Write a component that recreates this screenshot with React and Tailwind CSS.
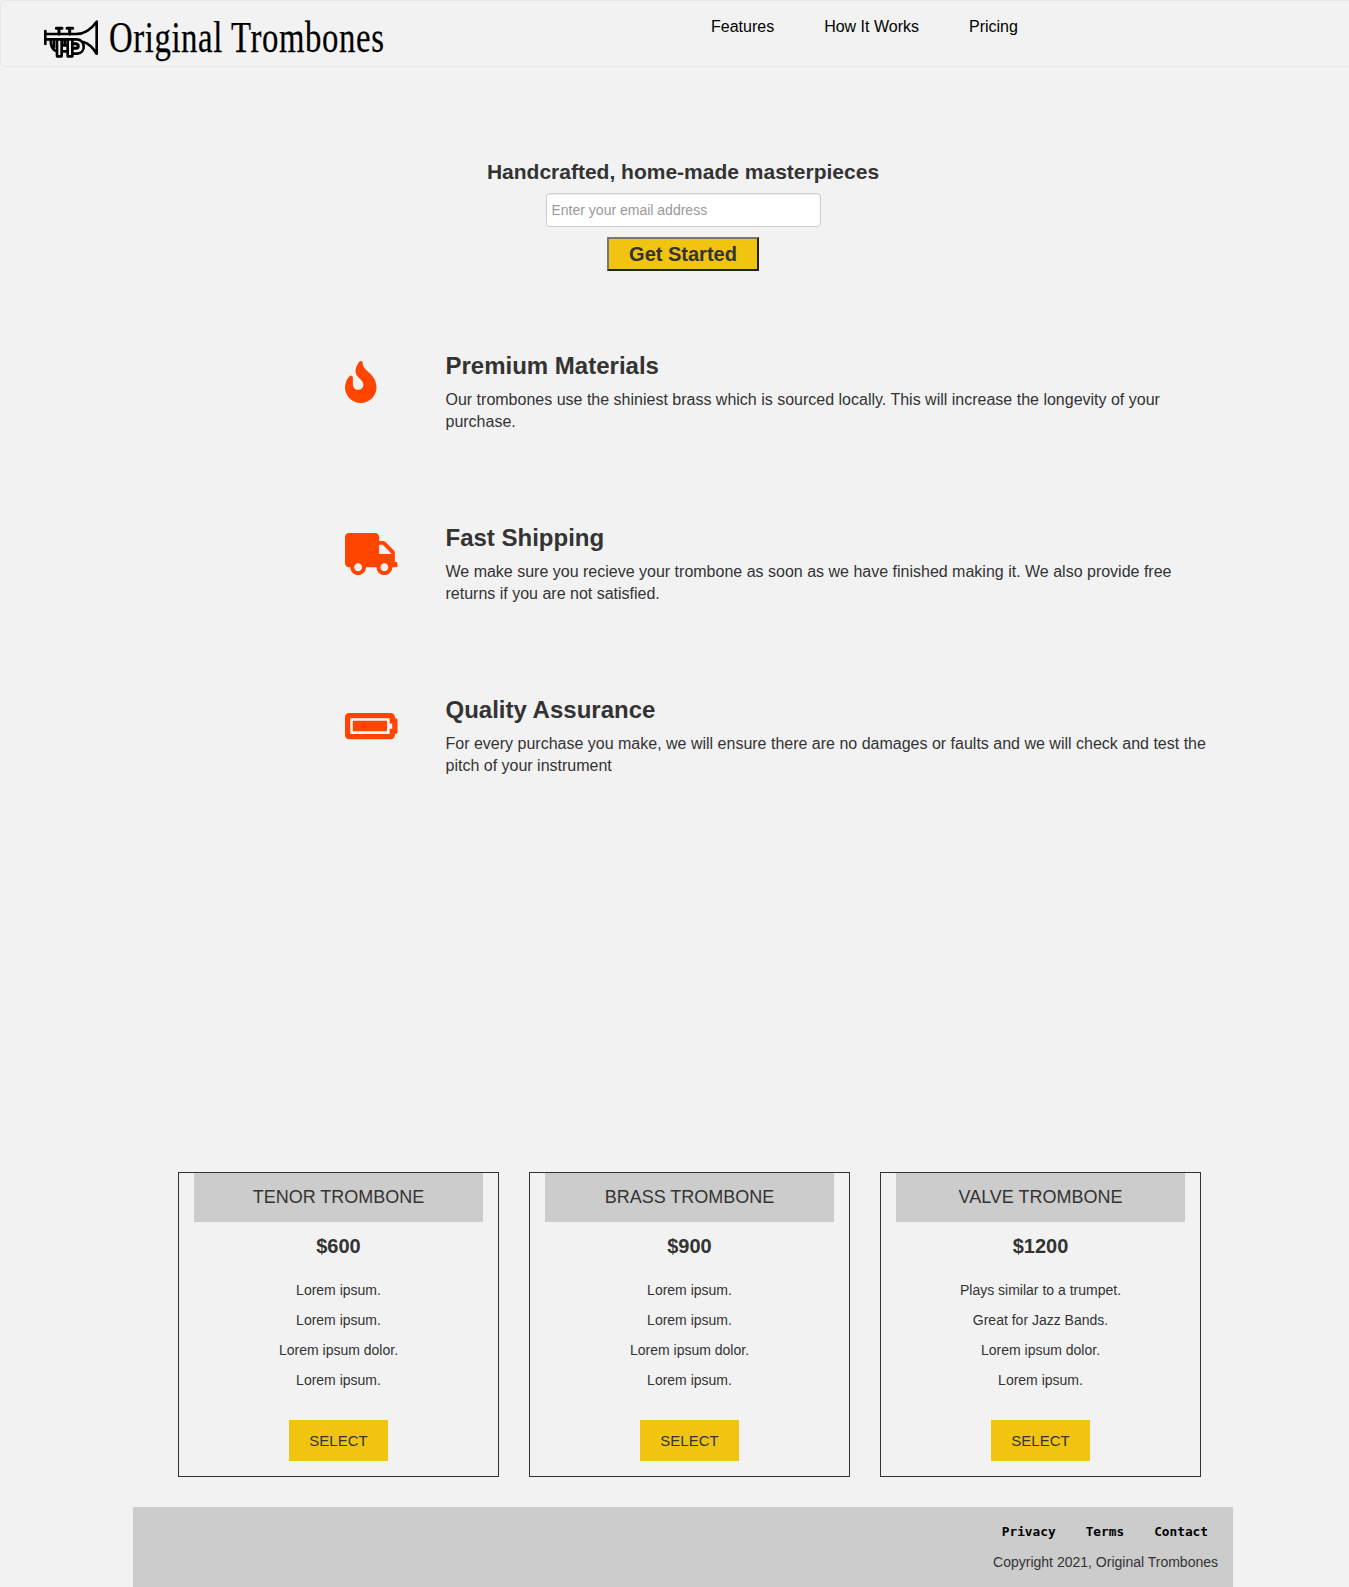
import { FaFire, FaTruck, FaBatteryFull } from "react-icons/fa";

const features = [
  {
    icon: FaFire,
    iconWidth: "w-[31.5px]",
    title: "Premium Materials",
    text: "Our trombones use the shiniest brass which is sourced locally. This will increase the longevity of your purchase.",
  },
  {
    icon: FaTruck,
    iconWidth: "w-[52.5px]",
    title: "Fast Shipping",
    text: "We make sure you recieve your trombone as soon as we have finished making it. We also provide free returns if you are not satisfied.",
  },
  {
    icon: FaBatteryFull,
    iconWidth: "w-[52.5px]",
    title: "Quality Assurance",
    text: "For every purchase you make, we will ensure there are no damages or faults and we will check and test the pitch of your instrument",
  },
];

const products = [
  {
    name: "TENOR TROMBONE",
    price: "$600",
    lines: ["Lorem ipsum.", "Lorem ipsum.", "Lorem ipsum dolor.", "Lorem ipsum."],
  },
  {
    name: "BRASS TROMBONE",
    price: "$900",
    lines: ["Lorem ipsum.", "Lorem ipsum.", "Lorem ipsum dolor.", "Lorem ipsum."],
  },
  {
    name: "VALVE TROMBONE",
    price: "$1200",
    lines: ["Plays similar to a trumpet.", "Great for Jazz Bands.", "Lorem ipsum dolor.", "Lorem ipsum."],
  },
];

function Logo() {
  return (
    <svg className="overflow-visible" width="350" height="50" viewBox="0 0 350 50" aria-label="Original Trombones">
      <g transform="translate(-14 -6) scale(0.33333)" fill="none" stroke="#000" strokeWidth="8" strokeLinecap="round" strokeLinejoin="round">
        <path d="M46 63V102" />
        <path d="M46 72H138C165 72 185 56 200 35V131C188 112 176 100 160 96" />
        <path d="M46 88H140C168 90 168 128 142 131H128" />
        <path d="M79 55H96M111 55H128M87 55V72M119 55V72" strokeWidth="9" />
        <path d="M62 90C62 106 66 120 80 124M72 90V112" />
        <path d="M81 90V139H95V90M113 90V139H127V90M95 106H113M95 124H113M104 90V104" strokeWidth="8" />
        <path d="M128 101H138C147 102 147 114 138 115H128" strokeWidth="9" />
      </g>
      <text
        x="65"
        y="36"
        fontFamily="'Liberation Serif', serif"
        fontSize="43.5"
        letterSpacing="0.8"
        textLength="275.5"
        lengthAdjust="spacingAndGlyphs"
        fill="#000"
        stroke="#000"
        strokeWidth="0.25"
      >
        Original Trombones
      </text>
    </svg>
  );
}

export default function App() {
  return (
    <div className="h-[1587px] w-full overflow-hidden bg-[#f2f2f2] font-['Liberation_Sans',Arial,sans-serif] text-sm text-[#333]">
      <header className="flex h-[67px] w-[1360px] rounded-[4px] border border-[#e7e7e7] bg-[#f2f2f2]">
        <div className="w-[710px] pt-[15px] pl-[43px]">
          <Logo />
        </div>
        <nav className="flex gap-[50px] pt-[15px] text-base leading-[22px] text-black">
          <a>Features</a>
          <a>How It Works</a>
          <a>Pricing</a>
        </nav>
      </header>

      <section className="ml-[133px] flex w-[1100px] flex-col items-center pt-[93px]">
        <h2 className="text-[21px] leading-6 font-bold">Handcrafted, home-made masterpieces</h2>
        <input
          className="mt-[9px] h-[34px] w-[275px] rounded-[4px] border border-[#ccc] bg-white px-[5px] text-sm shadow-[inset_0_1px_1px_rgba(0,0,0,0.075)] placeholder:text-[#999]"
          placeholder="Enter your email address"
        />
        <button className="mt-[10px] h-[34px] w-[152px] border-2 border-t-[#767676] border-r-[#212121] border-b-[#212121] border-l-[#767676] bg-[#f1c40f] text-xl leading-[30px] font-bold">
          Get Started
        </button>
      </section>

      <section className="mt-[80px] ml-[345.3px] w-[884px]">
        {features.map(({ icon: Icon, iconWidth, title, text }) => (
          <div key={title} className="flex h-[172px]">
            <div className="w-[100.2px] shrink-0 pt-[10px]">
              <Icon className={`h-[42px] text-[#ff4500] ${iconWidth}`} />
            </div>
            <div className="w-[768px]">
              <h3 className="text-2xl leading-[30px] font-bold">{title}</h3>
              <p className="mt-[8px] text-base leading-[22px]">{text}</p>
            </div>
          </div>
        ))}
      </section>

      <section className="mt-[305px] ml-[178px] flex gap-[30px]">
        {products.map(({ name, price, lines }) => (
          <article key={name} className="flex h-[305px] w-[321px] flex-col items-center border border-[#333] px-[15px] text-center">
            <h3 className="h-[49px] w-full bg-[#ccc] text-lg leading-[49px]">{name}</h3>
            <p className="mt-[10px] text-xl leading-7 font-bold">{price}</p>
            <ul className="mt-[15px] leading-[30px]">
              {lines.map((line, i) => (
                <li key={i}>{line}</li>
              ))}
            </ul>
            <button className="mt-[25px] h-[41px] w-[99px] bg-[#f1c40f] text-[15px]">SELECT</button>
          </article>
        ))}
      </section>

      <footer className="mt-[30px] ml-[133px] flex h-[80px] w-[1100px] flex-col items-end bg-[#ccc] pr-[15px]">
        <div className="mt-[15px] mr-[10px] flex gap-[30px] font-['DejaVu_Sans_Mono',monospace] text-[12.79px] leading-5 font-bold text-black">
          <a>Privacy</a>
          <a>Terms</a>
          <a>Contact</a>
        </div>
        <p className="mt-[10px] leading-5">Copyright 2021, Original Trombones</p>
      </footer>
    </div>
  );
}
